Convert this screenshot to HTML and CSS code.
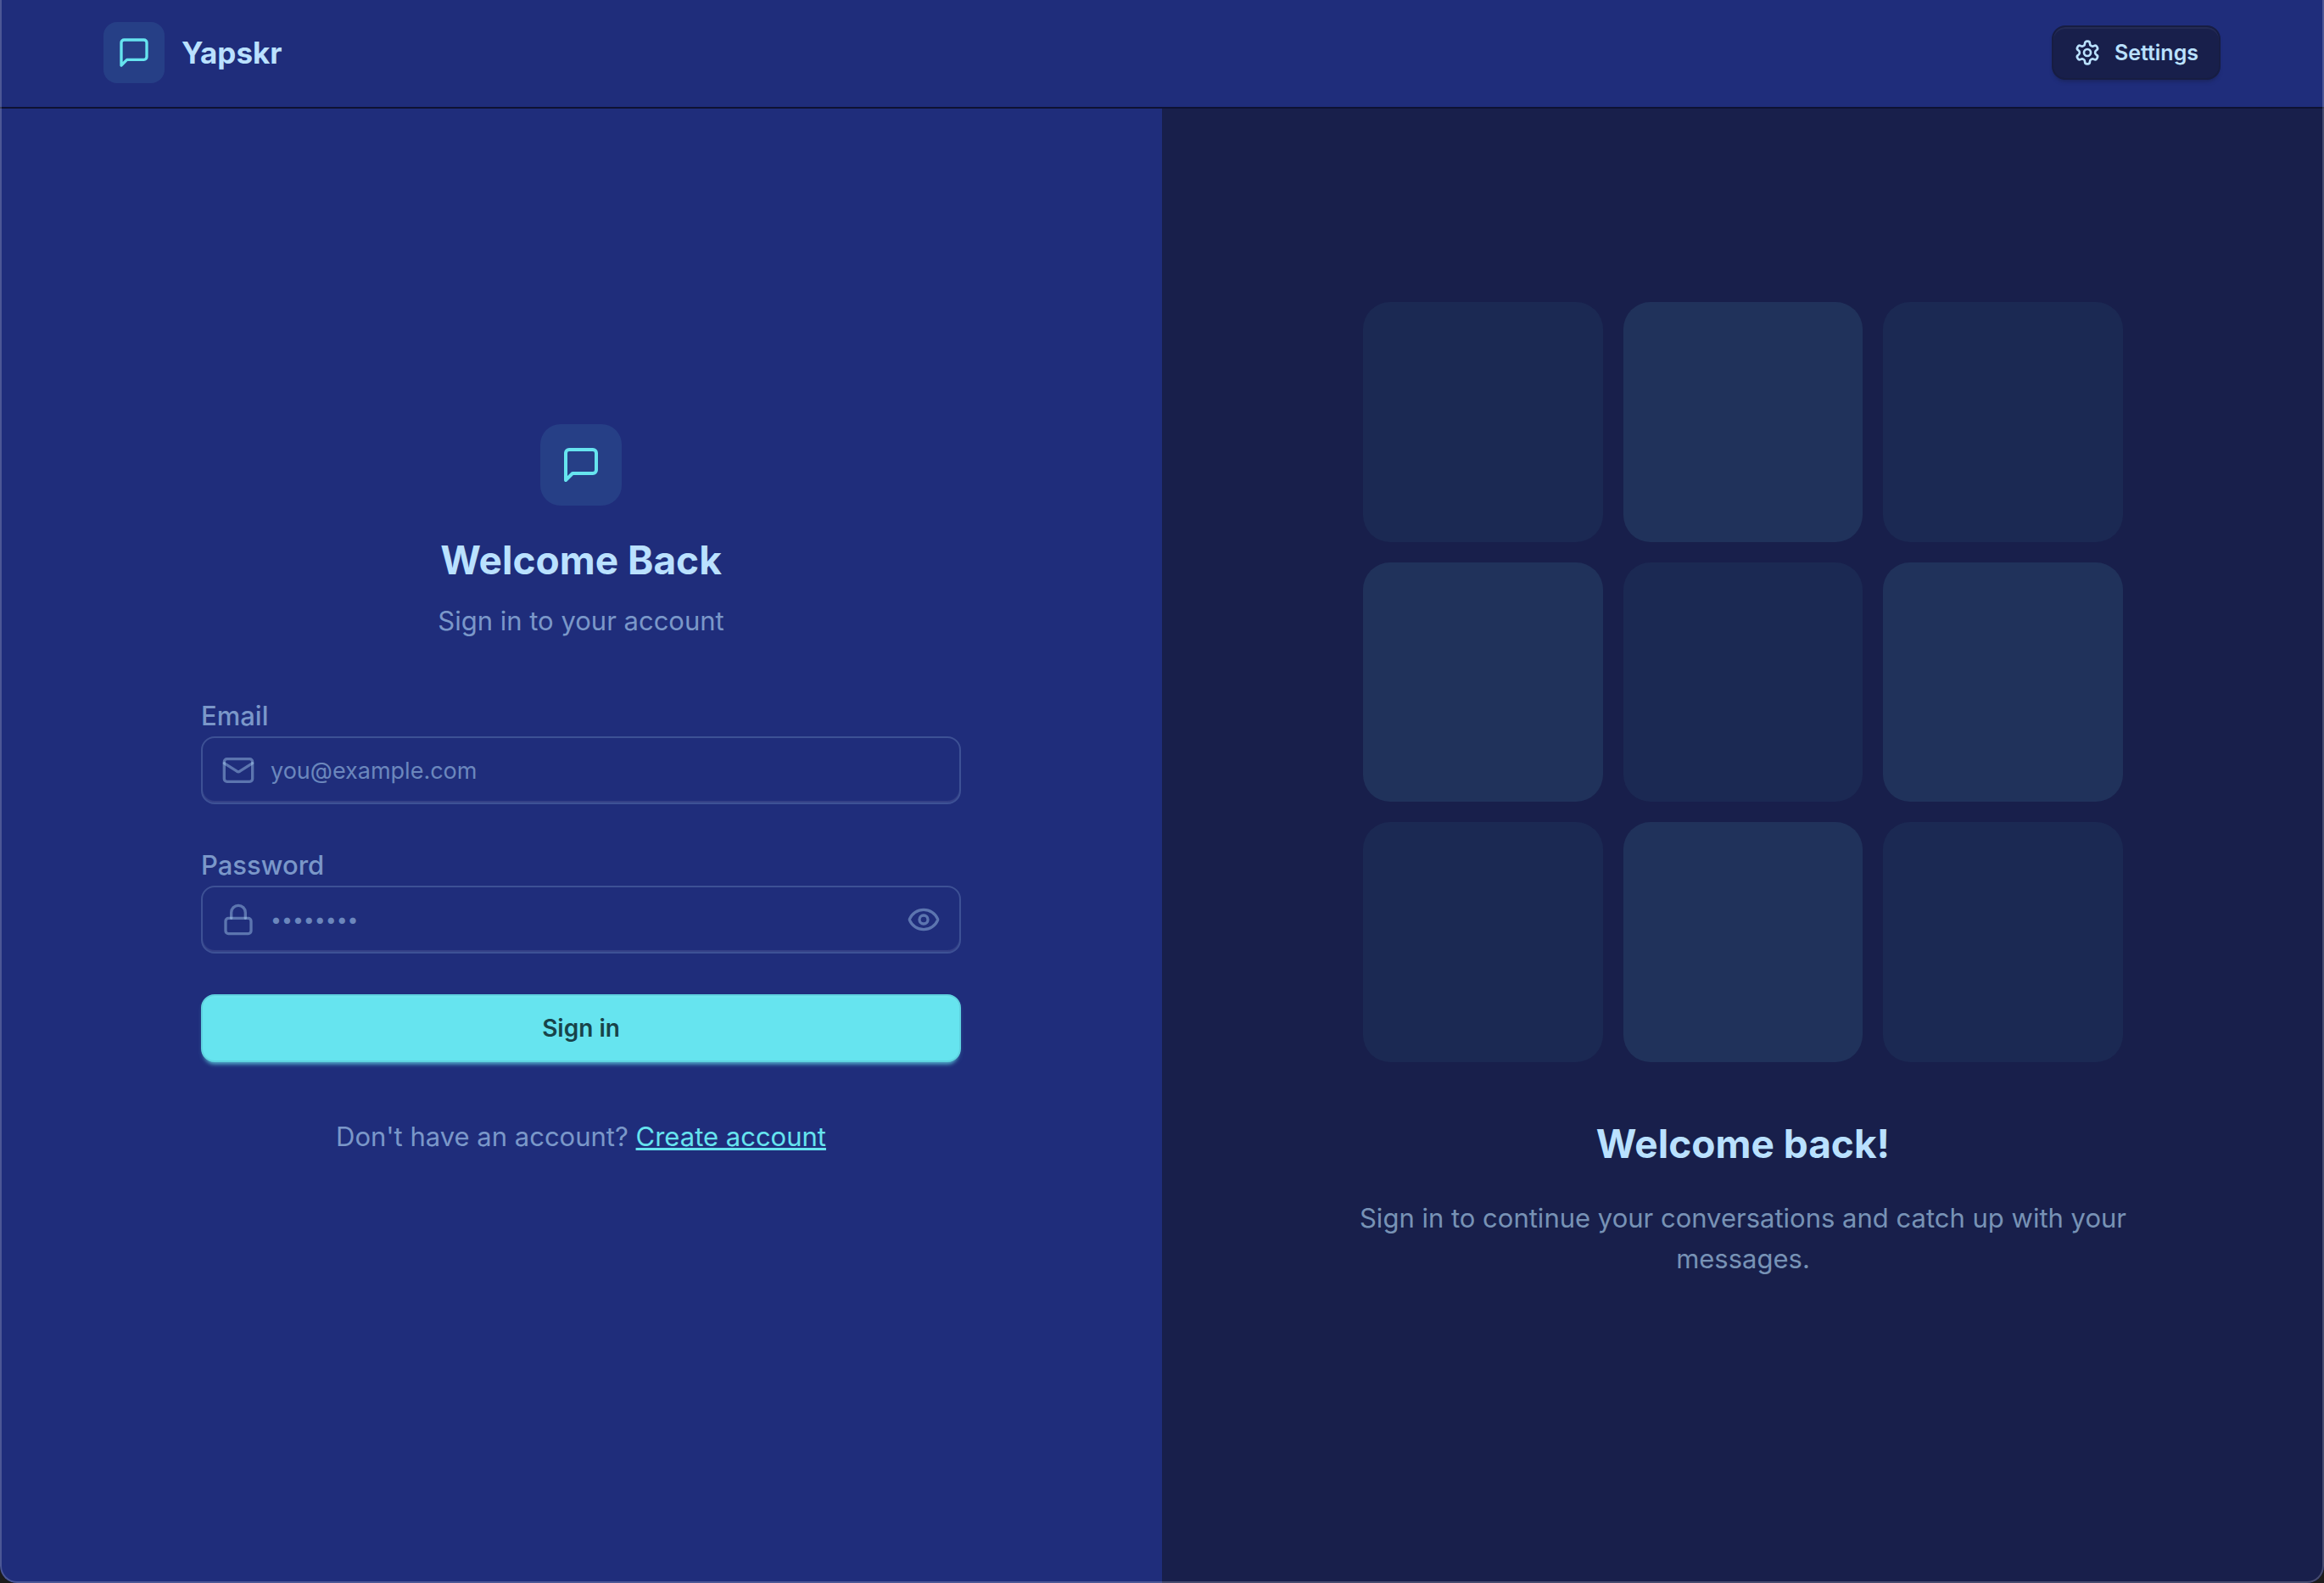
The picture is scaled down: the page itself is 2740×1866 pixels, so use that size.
FILE: index.html
```html
<!DOCTYPE html>
<html lang="en">
<head>
  <meta charset="utf-8">
  <meta name="viewport" content="width=device-width, initial-scale=1">
  <title>Yapskr</title>
  <link rel="stylesheet" href="styles.css">
</head>
<body>
  <div class="window">
    <header class="navbar">
      <a class="brand" href="#">
        <span class="brand-badge">
          <svg class="icon" viewBox="0 0 24 24" aria-hidden="true"><path d="M21 15a2 2 0 0 1-2 2H7l-4 4V5a2 2 0 0 1 2-2h14a2 2 0 0 1 2 2z"/></svg>
        </span>
        <span class="brand-name">Yapskr</span>
      </a>
      <button class="settings" type="button">
        <svg class="icon icon-small" viewBox="0 0 24 24" aria-hidden="true"><path d="M12.22 2h-.44a2 2 0 0 0-2 2v.18a2 2 0 0 1-1 1.73l-.43.25a2 2 0 0 1-2 0l-.15-.08a2 2 0 0 0-2.73.73l-.22.38a2 2 0 0 0 .73 2.73l.15.1a2 2 0 0 1 1 1.72v.51a2 2 0 0 1-1 1.74l-.15.09a2 2 0 0 0-.73 2.73l.22.38a2 2 0 0 0 2.73.73l.15-.08a2 2 0 0 1 2 0l.43.25a2 2 0 0 1 1 1.73V20a2 2 0 0 0 2 2h.44a2 2 0 0 0 2-2v-.18a2 2 0 0 1 1-1.73l.43-.25a2 2 0 0 1 2 0l.15.08a2 2 0 0 0 2.73-.73l.22-.39a2 2 0 0 0-.73-2.73l-.15-.08a2 2 0 0 1-1-1.74v-.5a2 2 0 0 1 1-1.74l.15-.09a2 2 0 0 0 .73-2.73l-.22-.38a2 2 0 0 0-2.73-.73l-.15.08a2 2 0 0 1-2 0l-.43-.25a2 2 0 0 1-1-1.73V4a2 2 0 0 0-2-2z"/><circle cx="12" cy="12" r="3"/></svg>
        Settings
      </button>
    </header>

    <main class="panels">
      <section class="panel panel-login">
        <div class="content">
          <div class="intro">
            <span class="intro-badge">
              <svg class="icon icon-large" viewBox="0 0 24 24" aria-hidden="true"><path d="M21 15a2 2 0 0 1-2 2H7l-4 4V5a2 2 0 0 1 2-2h14a2 2 0 0 1 2 2z"/></svg>
            </span>
            <h1 class="title">Welcome Back</h1>
            <p class="text">Sign in to your account</p>
          </div>

          <form class="form">
            <div class="field">
              <label class="label" for="email">Email</label>
              <div class="input">
                <svg class="icon icon-muted" viewBox="0 0 24 24" aria-hidden="true"><rect x="2" y="4" width="20" height="16" rx="2"/><path d="m22 7-8.991 5.727a2 2 0 0 1-2.009 0L2 7"/></svg>
                <input class="control" id="email" type="email" placeholder="you@example.com">
              </div>
            </div>
            <div class="field">
              <label class="label" for="password">Password</label>
              <div class="input">
                <svg class="icon icon-muted" viewBox="0 0 24 24" aria-hidden="true"><rect x="3" y="11" width="18" height="11" rx="2"/><path d="M7 11V7a5 5 0 0 1 10 0v4"/></svg>
                <input class="control control-password" id="password" type="password" placeholder="••••••••">
                <button class="reveal" type="button" aria-label="Show password">
                  <svg class="icon icon-muted" viewBox="0 0 24 24" aria-hidden="true"><path d="M2.062 12.348a1 1 0 0 1 0-.696 10.75 10.75 0 0 1 19.876 0 1 1 0 0 1 0 .696 10.75 10.75 0 0 1-19.876 0"/><circle cx="12" cy="12" r="3"/></svg>
                </button>
              </div>
            </div>
            <button class="submit" type="submit">Sign in</button>
          </form>

          <p class="text signup">Don't have an account? <a class="link" href="#">Create account</a></p>
        </div>
      </section>

      <section class="panel panel-pattern">
        <div class="content">
          <div class="pattern" aria-hidden="true">
            <div class="tile"></div><div class="tile"></div><div class="tile"></div>
            <div class="tile"></div><div class="tile"></div><div class="tile"></div>
            <div class="tile"></div><div class="tile"></div><div class="tile"></div>
          </div>
          <h2 class="title">Welcome back!</h2>
          <p class="text">Sign in to continue your conversations and catch up with your messages.</p>
        </div>
      </section>
    </main>
  </div>
</body>
</html>
```
FILE: styles.css
```css
:root {
  --base: #1f2d7b;
  --panel: #181f4b;
  --line: #0e1233;
  --text: #bae1ff;
  --accent: #66e4ef;
  --accent-ink: #184349;
}

* {
  box-sizing: border-box;
}

body {
  margin: 0;
  background: #1c1c1c;
  color: var(--text);
  font-family: Inter, "Liberation Sans", sans-serif;
  font-size: 31px;
  line-height: 48px;
}

h1, h2, p {
  margin: 0;
}

button, input {
  font: inherit;
  color: inherit;
}

/* Window frame: the hairline is drawn over the panels */
.window {
  position: relative;
  display: flex;
  flex-direction: column;
  min-height: 100vh;
  overflow: hidden;
  border-radius: 0 0 20px 20px;
  background: var(--base);
}

.window::after {
  content: "";
  position: absolute;
  inset: 0;
  border: 2px solid rgb(255 255 255 / 20%);
  border-top: 0;
  border-radius: inherit;
  pointer-events: none;
}

.icon {
  display: block;
  flex: none;
  width: 40px;
  height: 40px;
  fill: none;
  stroke: currentColor;
  stroke-width: 2;
  stroke-linecap: round;
  stroke-linejoin: round;
}

.icon-small {
  width: 32px;
  height: 32px;
}

.icon-large {
  width: 48px;
  height: 48px;
}

.icon-muted {
  stroke: rgb(186 225 255 / 40%);
}

/* Header */
.navbar {
  display: flex;
  align-items: center;
  justify-content: space-between;
  padding: 26px 122px 28px;
  border-bottom: 2px solid var(--line);
}

.brand {
  display: flex;
  align-items: center;
  gap: 20px;
  color: inherit;
  text-decoration: none;
}

.brand-badge, .intro-badge {
  display: grid;
  place-items: center;
  background: rgb(103 228 239 / 10%);
  color: var(--accent);
}

.brand-badge {
  width: 72px;
  height: 72px;
  border-radius: 16px;
}

.brand-name {
  font-size: 35px;
  font-weight: 700;
}

.settings {
  display: flex;
  align-items: center;
  gap: 16px;
  height: 64px;
  padding: 0 24px;
  border: 2px solid #171d42;
  border-radius: 16px;
  background: var(--panel);
  box-shadow: inset 0 2px 1px rgb(255 255 255 / 6%), 0 4px 4px -2px rgb(24 31 75 / 60%);
  font-size: 25px;
  font-weight: 600;
}

/* Panels */
.panels {
  flex: 1;
  display: grid;
  grid-template-columns: 1fr 1fr;
}

.panel {
  display: flex;
  align-items: center;
  justify-content: center;
  padding: 0 96px 130px;
}

.panel-pattern {
  background: var(--panel);
}

.content {
  width: 100%;
  max-width: 896px;
  text-align: center;
}

.title {
  font-size: 46px;
  font-weight: 700;
  line-height: 64px;
}

.text {
  color: rgb(186 225 255 / 60%);
}

/* Sign-in form */
.intro {
  display: flex;
  flex-direction: column;
  align-items: center;
}

.intro-badge {
  width: 96px;
  height: 96px;
  margin-bottom: 32px;
  border-radius: 24px;
}

.intro .text {
  margin-top: 16px;
}

.form {
  display: flex;
  flex-direction: column;
  gap: 48px;
  margin-top: 64px;
}

.field {
  text-align: left;
}

.label {
  display: block;
  color: rgb(186 225 255 / 60%);
  font-weight: 500;
}

.input {
  display: flex;
  align-items: center;
  gap: 18px;
  height: 80px;
  padding: 0 22px;
  border: 2px solid rgb(186 225 255 / 20%);
  border-radius: 16px;
  box-shadow: inset 0 -2px 1px rgb(255 255 255 / 10%);
}

.control {
  flex: 1;
  min-width: 0;
  height: 100%;
  padding: 0;
  border: 0;
  outline: 0;
  background: none;
  font-size: 27px;
}

.control-password {
  font-size: 23px;
}

.control::placeholder {
  color: rgb(186 225 255 / 50%);
  opacity: 1;
}

.reveal {
  padding: 0;
  border: 0;
  background: none;
}

.submit {
  height: 80px;
  border: 2px solid #5fd3e0;
  border-radius: 16px;
  background: var(--accent);
  box-shadow: inset 0 2px 1px rgb(255 255 255 / 6%), 0 6px 4px -4px rgb(103 228 239 / 60%), 0 4px 6px -2px rgb(103 228 239 / 30%);
  color: var(--accent-ink);
  font-size: 28px;
  font-weight: 600;
}

.signup {
  margin-top: 64px;
}

.link {
  color: var(--accent);
}

/* Decorative tiles */
.pattern {
  display: grid;
  grid-template-columns: repeat(3, 1fr);
  gap: 24px;
  margin-bottom: 64px;
}

.tile {
  aspect-ratio: 1;
  border-radius: 32px;
  background: rgb(103 228 239 / 5%);
}

.tile:nth-child(even) {
  background: rgb(103 228 239 / 10%);
}

/* The caption runs slightly wider than the tiles */
.panel-pattern .text {
  margin: 32px -12px 0;
}
```
